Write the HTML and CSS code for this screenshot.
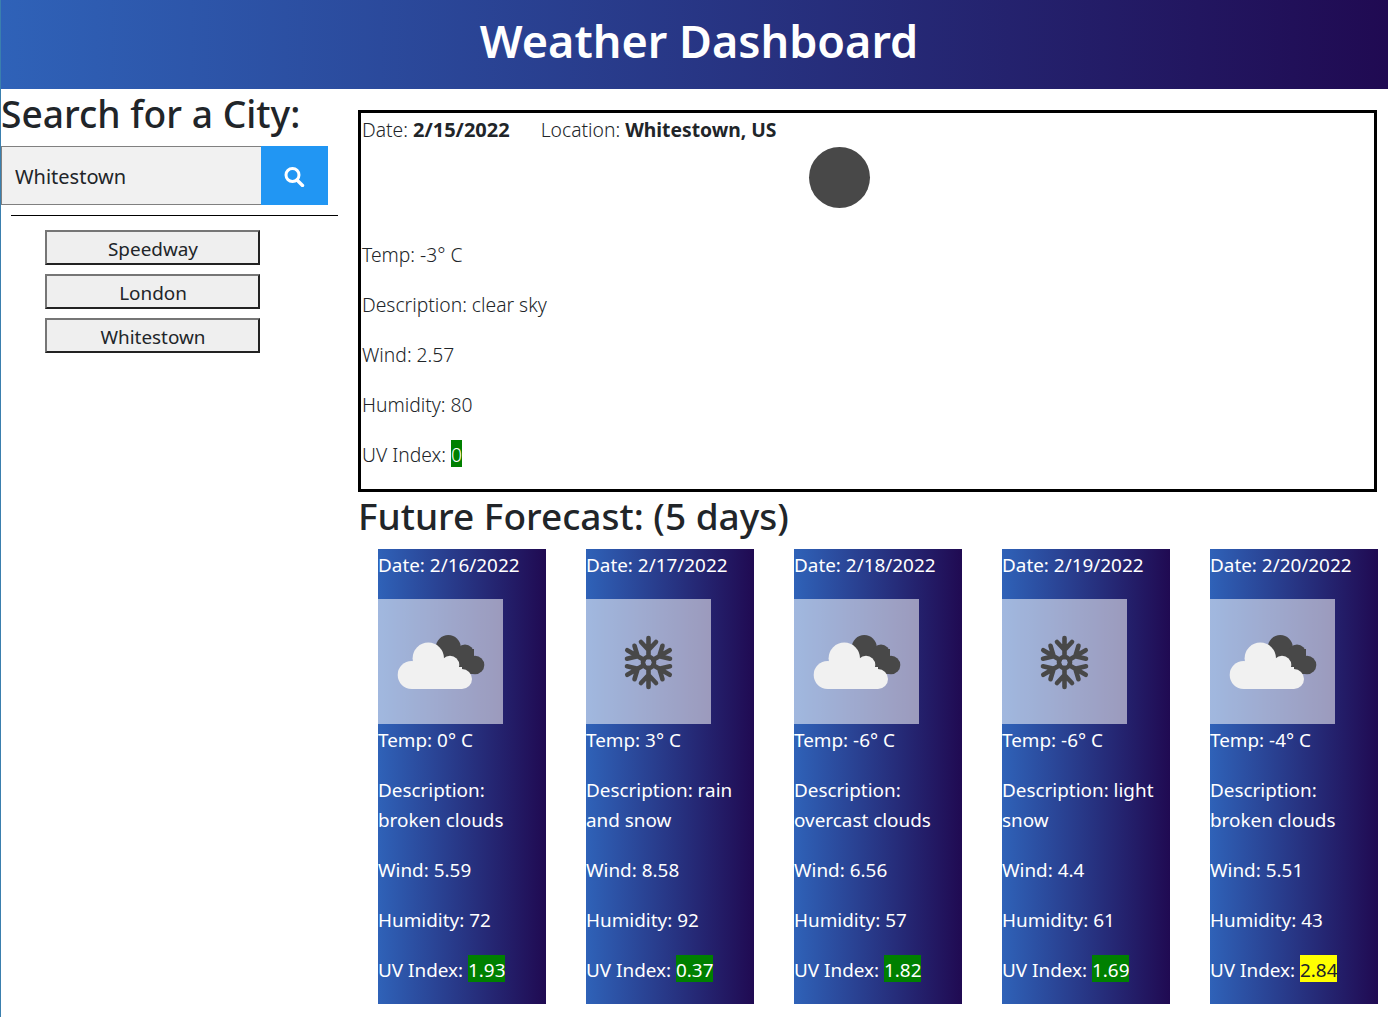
FILE: index.html
```html
<!DOCTYPE html>
<html lang="en">
<head>
  <meta charset="UTF-8" />
  <meta name="viewport" content="width=device-width, initial-scale=1.0" />
  <title>Weather Dashboard</title>
  <link rel="stylesheet" href="styles.css">
</head>
<body>
  <svg class="defs" width="0" height="0">
    <symbol id="clouds" viewBox="0 0 125 125">
      <g fill="#484848">
        <circle cx="70.3" cy="48.5" r="12.5" />
        <circle cx="87" cy="54.5" r="9" />
        <circle cx="97" cy="66" r="9.3" />
        <rect x="66" y="50" width="30" height="25" />
      </g>
      <g fill="#f1f1f1">
        <circle cx="33.7" cy="76" r="14" />
        <circle cx="50.3" cy="59.3" r="15.7" />
        <circle cx="72" cy="66" r="9.3" />
        <circle cx="84" cy="80" r="10" />
        <rect x="34" y="68" width="50" height="22" />
      </g>
    </symbol>
    <symbol id="snow" viewBox="0 0 125 125">
      <g fill="none" stroke="#484848" stroke-width="4.6" stroke-linecap="round" stroke-linejoin="round">
        <circle cx="62.5" cy="63.5" r="5.5" />
        <g id="arm">
          <path d="M62.5 58V39M55 43l7.500 8 7.500-8" />
        </g>
        <use href="#arm" transform="rotate(60 62.500 63.500)" />
        <use href="#arm" transform="rotate(120 62.500 63.500)" />
        <use href="#arm" transform="rotate(180 62.500 63.500)" />
        <use href="#arm" transform="rotate(240 62.500 63.500)" />
        <use href="#arm" transform="rotate(300 62.500 63.500)" />
      </g>
    </symbol>
  </svg>

  <header class="banner">
    <h1>Weather Dashboard</h1>
  </header>

  <div class="layout">
    <aside class="sidebar">
      <h2>Search for a City:</h2>
      <form class="search">
        <input class="search-input" type="text" value="Whitestown" />
        <button class="search-btn" type="button" aria-label="Search">
          <svg width="22" height="22" viewBox="0 0 22 22">
            <circle cx="8.500" cy="10" r="6.500" fill="none" stroke="#fff" stroke-width="3" />
            <path d="M13 15l5.500 5.500" stroke="#fff" stroke-width="3.400" stroke-linecap="round" />
          </svg>
        </button>
      </form>
      <hr class="rule" />
      <div class="history">
        <button type="button">Speedway</button>
        <button type="button">London</button>
        <button type="button">Whitestown</button>
      </div>
    </aside>

    <main class="content">
      <section class="today">
        <p class="today-head">
          <span class="today-date">Date: <b>2/15/2022</b></span>
          <span>Location: <b>Whitestown, US</b></span>
        </p>
        <div class="sun"></div>
        <p>Temp: -3° C</p>
        <p>Description: clear sky</p>
        <p>Wind: 2.57</p>
        <p>Humidity: 80</p>
        <p>UV Index: <span class="uv low">0</span></p>
      </section>

      <h2>Future Forecast: (5 days)</h2>
      <div class="forecast">
        <article class="card">
          <p class="card-date">Date: 2/16/2022</p>
          <svg class="card-icon"><use href="#clouds" /></svg>
          <p>Temp: 0° C</p>
          <p>Description: broken clouds</p>
          <p>Wind: 5.59</p>
          <p>Humidity: 72</p>
          <p>UV Index: <span class="uv low">1.93</span></p>
        </article>
        <article class="card">
          <p class="card-date">Date: 2/17/2022</p>
          <svg class="card-icon"><use href="#snow" /></svg>
          <p>Temp: 3° C</p>
          <p>Description: rain and snow</p>
          <p>Wind: 8.58</p>
          <p>Humidity: 92</p>
          <p>UV Index: <span class="uv low">0.37</span></p>
        </article>
        <article class="card">
          <p class="card-date">Date: 2/18/2022</p>
          <svg class="card-icon"><use href="#clouds" /></svg>
          <p>Temp: -6° C</p>
          <p>Description: overcast clouds</p>
          <p>Wind: 6.56</p>
          <p>Humidity: 57</p>
          <p>UV Index: <span class="uv low">1.82</span></p>
        </article>
        <article class="card">
          <p class="card-date">Date: 2/19/2022</p>
          <svg class="card-icon"><use href="#snow" /></svg>
          <p>Temp: -6° C</p>
          <p>Description: light snow</p>
          <p>Wind: 4.4</p>
          <p>Humidity: 61</p>
          <p>UV Index: <span class="uv low">1.69</span></p>
        </article>
        <article class="card">
          <p class="card-date">Date: 2/20/2022</p>
          <svg class="card-icon"><use href="#clouds" /></svg>
          <p>Temp: -4° C</p>
          <p>Description: broken clouds</p>
          <p>Wind: 5.51</p>
          <p>Humidity: 43</p>
          <p>UV Index: <span class="uv mid">2.84</span></p>
        </article>
      </div>
    </main>
  </div>
</body>
</html>
```

FILE: styles.css
```css
* {
  box-sizing: border-box;
}
body {
  margin: 0;
  min-height: 1017px;
  border-left: 1px solid #3a7fae;
  background: #fff;
  color: #212529;
  font-family: "Noto Sans", sans-serif;
  font-size: 19px;
  line-height: 30px;
}
.defs {
  position: absolute;
}
p {
  margin: 0 0 20px;
}
h2 {
  margin: 0;
  font-size: 37px;
  font-weight: 500;
  line-height: 44px;
}
.banner {
  height: 89px;
  padding-left: 9px;
  background: linear-gradient(to right, #2f62b8, #200a52);
  color: #fff;
  text-align: center;
}
.banner h1 {
  margin: 0;
  font-size: 45px;
  font-weight: 600;
  line-height: 82px;
}
.layout {
  display: flex;
}
.sidebar {
  width: 357px;
  flex: none;
  padding-top: 3px;
}
.sidebar h2 {
  height: 54px;
  font-size: 37.2px;
}
.search {
  display: flex;
  width: 327px;
  height: 59px;
}
.search-input {
  width: 260px;
  padding: 2px 13px 0;
  border: 1px solid #808080;
  border-right: none;
  border-radius: 0;
  background: #f1f1f1;
  color: #212529;
  font: inherit;
  font-size: 20px;
}
.search-btn {
  display: flex;
  width: 67px;
  align-items: center;
  justify-content: center;
  padding: 0;
  border: none;
  background: #2196f3;
}
.rule {
  width: 327px;
  height: 1px;
  margin: 10px 0 14px 10px;
  border: none;
  background: #000;
}
.history {
  display: flex;
  flex-direction: column;
  gap: 9px;
  padding-left: 44px;
}
.history button {
  width: 215px;
  height: 35px;
  padding: 2px 0 0 1px;
  border: 2px solid;
  border-color: #767676 #222 #222 #767676;
  background: #efefef;
  color: #212529;
  font: inherit;
  font-size: 18.9px;
}
.content {
  width: 1020px;
  flex: none;
  padding-top: 21px;
}
.today {
  width: 1019px;
  height: 382px;
  padding: 2px 0 0 1px;
  border: 3px solid #000;
  font-size: 19.3px;
  font-weight: 300;
}
.today-date {
  margin-right: 26px;
}
.today-date b {
  font-size: 20px;
}
.today b {
  font-weight: 700;
}
.today-head {
  margin-bottom: 0;
}
.sun {
  width: 61px;
  height: 61px;
  margin: 2px 0 32px 447px;
  border-radius: 50%;
  background: #484848;
}
.uv {
  display: inline-block;
  height: 27px;
  vertical-align: top;
  color: #fff;
}
.uv.low {
  background: #008000;
}
.uv.mid {
  background: #ffff00;
  color: #212529;
}
.content h2 {
  margin-top: 2px;
  height: 55px;
}
.forecast {
  display: flex;
  gap: 40px;
  padding-left: 20px;
}
.card {
  width: 168px;
  height: 455px;
  padding-top: 1px;
  background: linear-gradient(to right, #2f62b8, #200a52);
  color: #fff;
  font-size: 18.9px;
}
.card-date {
  margin-bottom: 19px;
}
.card-icon {
  display: block;
  width: 125px;
  height: 125px;
  margin-bottom: 1px;
  background: rgba(255, 255, 255, 0.55);
}
```
